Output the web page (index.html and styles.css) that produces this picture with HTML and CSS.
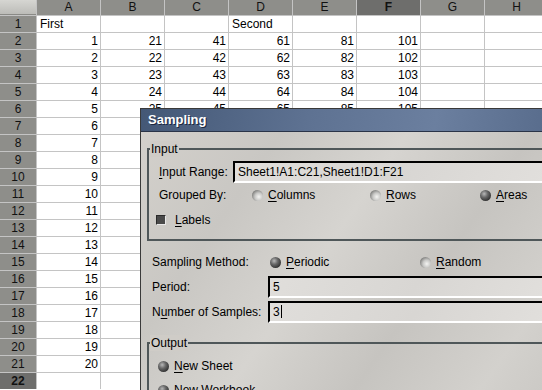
FILE: index.html
```html
<!DOCTYPE html>
<html lang="en">
<head>
  <meta charset="UTF-8" />
  <title>Sampling</title>
  <link rel="stylesheet" href="styles.css">
</head>
<body>
  <!-- Spreadsheet grid, filled by the script below -->
  <div class="sheet" id="sheet"></div>

  <!-- Sampling dialog -->
  <div class="dialog">
    <div class="dialog-title">Sampling</div>
    <div class="dialog-body">

      <div class="frame frame-input">
        <span class="frame-label">Input</span>
        <div class="row row-range">
          <span class="lbl lbl-range"><u>I</u>nput Range:</span>
          <div class="field field-range">Sheet1!A1:C21,Sheet1!D1:F21</div>
        </div>
        <div class="row row-grouped">
          <span class="lbl lbl-grouped">Grouped By:</span>
          <span class="opt opt-columns"><i class="radio"></i><span><u>C</u>olumns</span></span>
          <span class="opt opt-rows"><i class="radio"></i><span><u>R</u>ows</span></span>
          <span class="opt"><i class="radio checked"></i><span><u>A</u>reas</span></span>
        </div>
        <div class="row row-labels">
          <span class="opt"><i class="check"></i><span><u>L</u>abels</span></span>
        </div>
      </div>

      <div class="row row-method">
        <span class="lbl lbl-method">Sampling Method:</span>
        <span class="opt opt-periodic"><i class="radio checked"></i><span><u>P</u>eriodic</span></span>
        <span class="opt"><i class="radio"></i><span><u>R</u>andom</span></span>
      </div>
      <div class="row row-field">
        <span class="lbl lbl-field">Period:</span>
        <div class="field">5</div>
      </div>
      <div class="row row-field row-samples">
        <span class="lbl lbl-field">N<u>u</u>mber of Samples:</span>
        <div class="field">3<span class="caret"></span></div>
      </div>

      <div class="frame frame-output">
        <span class="frame-label">Output</span>
        <div class="row row-out">
          <span class="opt"><i class="radio checked"></i><span><u>N</u>ew Sheet</span></span>
        </div>
        <div class="row row-out">
          <span class="opt"><i class="radio checked"></i><span>New <u>W</u>orkbook</span></span>
        </div>
      </div>

    </div>
  </div>

  <script>
    const cols = ["A", "B", "C", "D", "E", "F", "G", "H"];
    const sheet = document.getElementById("sheet");

    function cell(cls, text) {
      const c = document.createElement("div");
      c.className = cls;
      c.textContent = text;
      sheet.appendChild(c);
    }

    // header row
    cell("corner", "");
    cols.forEach(col => {
      cell(col === "F" ? "colhead selected" : "colhead", col);
    });

    for (let r = 1; r <= 22; r++) {
      cell(r === 22 ? "rowhead selected" : "rowhead", r);
      cols.forEach((col, i) => {
        let text = "";
        if (r === 1 && col === "A") text = "First";
        else if (r === 1 && col === "D") text = "Second";
        else if (r >= 2 && r <= 21 && i < 6) text = (r - 1) + i * 20;
        cell(typeof text === "number" ? "cell num" : "cell", text);
      });
    }
  </script>
</body>
</html>
```

FILE: styles.css
```css
body {
  margin: 0;
  width: 542px;
  height: 390px;
  overflow: hidden;
  font-family: "Liberation Sans", Arial, sans-serif;
  font-size: 12px;
  color: #000;
  position: relative;
  background: #fff;
}

/* ---------- spreadsheet ---------- */

.sheet {
  display: grid;
  grid-template-columns: 36px repeat(8, 63px);
  grid-template-rows: 15px repeat(22, 16px);
  gap: 1px;
  background: #c4c4c4;
  width: 600px;
}

.corner {
  background: linear-gradient(#d6d6d2, #bcbcb8);
  border-bottom: 1px solid #8a8a86;
  height: 14px;
}

.colhead, .rowhead {
  background: #8e8e8a;
  color: #111;
  text-align: center;
  line-height: 15px;
}

.rowhead {
  line-height: 16px;
}

.colhead.selected, .rowhead.selected {
  background: #6e6e6c;
  font-weight: bold;
}

.cell {
  background: #fff;
  line-height: 16px;
  padding: 0 3px;
  white-space: nowrap;
  overflow: hidden;
}

.cell.num {
  text-align: right;
  padding: 0 2px 0 0;
}

/* ---------- dialog ---------- */

.dialog {
  position: absolute;
  left: 140px;
  top: 108px;
  width: 420px;
  height: 300px;
  border: 1px solid #3a3a3a;
  background: linear-gradient(125deg, #d4d1cc 0%, #c9c7c3 25%, #d6d4d0 45%, #c6c4c0 65%, #d3d1cd 85%, #c8c6c2 100%);
}

.dialog-title {
  height: 22px;
  line-height: 22px;
  padding-left: 7px;
  color: #fff;
  font-size: 13px;
  font-weight: bold;
  text-shadow: 1px 1px 0 #1c2840;
  background: linear-gradient(100deg, #445876 0%, #5e7292 40%, #6b7f9f 70%, #566a8a 100%);
  border-bottom: 1px solid #2a3448;
}

.dialog-body {
  padding: 16px 0 0 6px;
}

.frame {
  position: relative;
  border-top: 2px solid #4f5759;
  border-left: 2px solid #4f5759;
  border-bottom: 2px solid #4f5759;
  padding-left: 10px;
}

.frame-label {
  position: absolute;
  left: 1px;
  top: -9px;
  padding: 0 1px;
  line-height: 16px;
  background: #cfccc7;
}

.frame-input {
  padding-top: 11px;
  padding-bottom: 9px;
}

.frame-output {
  margin-top: 19px;
  padding-top: 12px;
  border-bottom: none;
  height: 60px;
}

.row {
  display: flex;
  align-items: center;
  white-space: nowrap;
}

.lbl {
  flex: none;
}

.row-range {
  height: 22px;
}

.lbl-range {
  width: 74px;
}

.row-grouped {
  height: 20px;
  margin-top: 2px;
}

.lbl-grouped {
  width: 92px;
}

.row-labels {
  height: 20px;
  margin-top: 5px;
  margin-left: -4px;
}

.row-method {
  height: 20px;
  margin-top: 11px;
  padding-left: 5px;
}

.lbl-method {
  width: 117px;
}

.row-field {
  height: 22px;
  margin-top: 4px;
  padding-left: 5px;
}

.row-samples {
  margin-top: 3px;
}

.lbl-field {
  width: 116px;
}

.row-out {
  height: 20px;
  margin-bottom: 4px;
  margin-left: -2px;
}

.opt {
  display: flex;
  align-items: center;
  flex: none;
}

.opt-columns {
  width: 118px;
}

.opt-rows {
  width: 110px;
}

.opt-periodic {
  width: 150px;
}

.field {
  flex: 1;
  height: 18px;
  line-height: 18px;
  padding-left: 3px;
  background: linear-gradient(120deg, #e0dedb, #d8d6d3 50%, #e2e0dd);
  border-top: 2px solid #000;
  border-left: 2px solid #000;
  border-bottom: 2px solid #fff;
}

.caret {
  display: inline-block;
  width: 1px;
  height: 13px;
  margin-left: 1px;
  background: #000;
  vertical-align: -2px;
}

/* radio and check marks */

.radio {
  width: 11px;
  height: 11px;
  border-radius: 50%;
  margin: 0 5px 0 1px;
  background: radial-gradient(circle at 62% 62%, #f4f4f2 0%, #c8c8c6 40%, #8a8a88 70%, #3e3e3e 100%);
}

.radio.checked {
  background: radial-gradient(circle at 38% 35%, #b8b8b8 0%, #6a6a6a 35%, #383838 70%, #1e1e1e 100%);
}

.check {
  width: 8px;
  height: 8px;
  margin: 0 9px 0 1px;
  border: 1px solid #e8e8e8;
  border-top-color: #2a2a2a;
  border-left-color: #2a2a2a;
  background: #4a4a4a;
}

u {
  text-decoration: underline;
  text-underline-offset: 2px;
}
```
